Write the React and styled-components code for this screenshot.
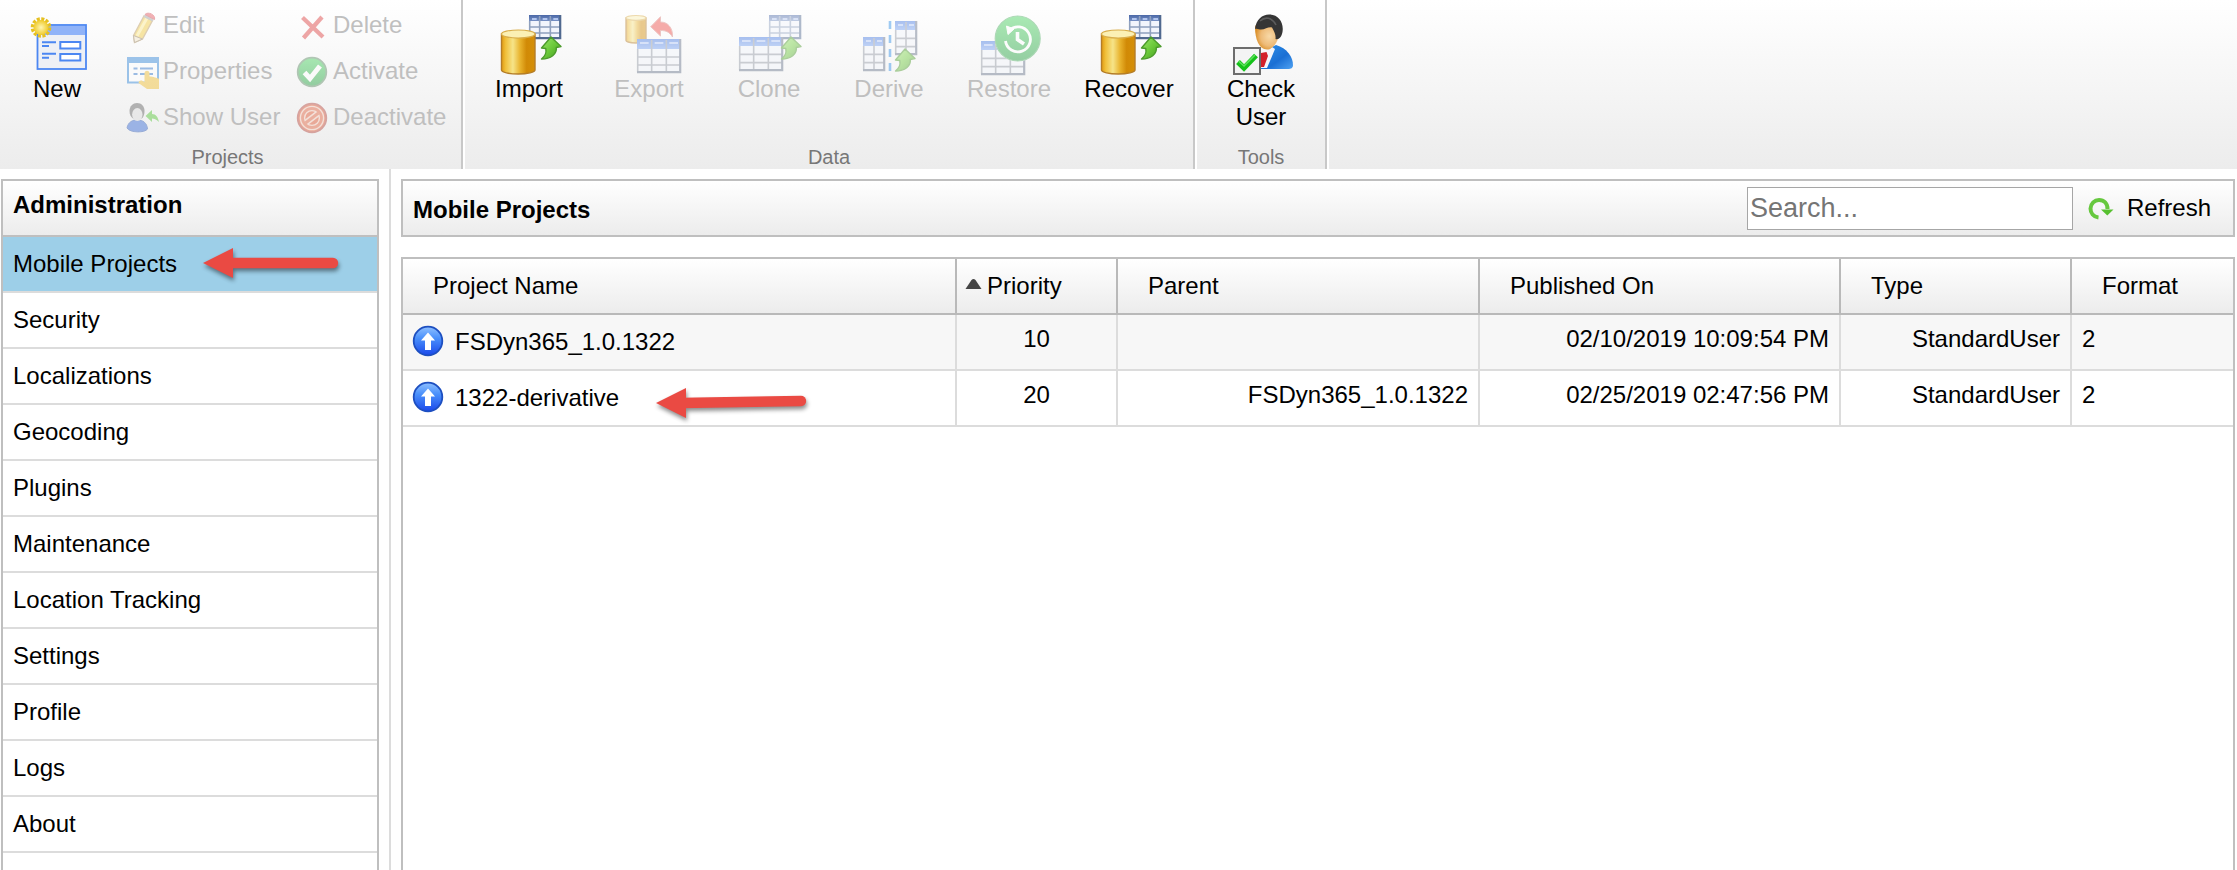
import React from "react";
import styled, { createGlobalStyle, css } from "styled-components";

const GlobalStyle = createGlobalStyle`
  *, *::before, *::after { box-sizing: border-box; }
  body {
    margin: 0;
    background: #fff;
    color: #000;
    font: 24px/28px "Liberation Sans", Arial, sans-serif;
  }
  button, input { font: inherit; color: inherit; }
`;

const LINE = "#bfbfbf";
const SOFT_LINE = "#dcdcdc";
const shade = css`
  background: linear-gradient(#ffffff, #ececec);
`;

const Page = styled.div`
  display: flex;
  flex-direction: column;
  min-height: 100vh;
`;

/* Ribbon */
const Ribbon = styled.header`
  ${shade}
  display: flex;
  height: 169px;
`;
const Group = styled.section`
  display: flex;
  flex-direction: column;
  justify-content: space-between;
  padding: 11px 4px 0;
  border-right: 2px solid #c8c8c8;
  box-shadow: 2px 0 0 #fff;
  & + & { margin-left: 2px; }
`;
const Tools = styled.div`
  display: flex;
`;
const GroupLabel = styled.h2`
  margin: 0;
  padding-right: ${(p) => (p.$inset ? 6 : 0)}px;
  font-size: 20px;
  line-height: 24px;
  font-weight: 400;
  color: #777;
  text-align: center;
`;
const plainButton = css`
  border: 0;
  padding: 0;
  background: none;
  cursor: pointer;
  &:disabled { color: #bfbfbf; cursor: default; }
  &:disabled svg { opacity: 0.45; }
`;
const BigButton = styled.button`
  ${plainButton}
  display: flex;
  flex-direction: column;
  align-items: center;
  width: ${(p) => (p.$narrow ? 106 : 120)}px;
  line-height: 28px;
`;
const BigLabel = styled.span`
  max-width: 92px;
`;
const SmallGrid = styled.div`
  display: grid;
  grid-template-columns: 170px 160px;
  grid-auto-rows: 32px;
  row-gap: 14px;
  padding-left: 17px;
`;
const SmallButton = styled.button`
  ${plainButton}
  display: flex;
  align-items: flex-start;
  gap: 4px;
  line-height: 28px;
  white-space: nowrap;
`;
const Icon = styled.svg`
  display: block;
  flex: none;
  width: ${(p) => p.$size}px;
  height: ${(p) => p.$size}px;
  overflow: visible;
`;

/* Body */
const Body = styled.div`
  display: flex;
  flex: 1;
`;
const Side = styled.aside`
  width: 391px;
  flex: none;
  display: flex;
  padding: 10px 10px 0 1px;
  border-right: 2px solid ${SOFT_LINE};
`;
const SidePanel = styled.nav`
  flex: 1;
  border: 2px solid ${LINE};
  border-bottom: 0;
`;
const SideTitle = styled.h1`
  ${shade}
  margin: 0;
  height: 56px;
  padding: 10px;
  border-bottom: 2px solid ${LINE};
  font-size: 24px;
  line-height: 28px;
`;
const SideList = styled.ul`
  margin: 0;
  padding: 0;
  list-style: none;
`;
const SideLink = styled.a`
  position: relative;
  display: block;
  height: 56px;
  padding: 13px 10px;
  border-bottom: 2px solid ${SOFT_LINE};
  background: ${(p) => (p.$active ? "#9dcfe8" : "#fff")};
  background-clip: padding-box;
  color: #000;
  text-decoration: none;
`;
const Main = styled.main`
  flex: 1;
  min-width: 0;
  display: flex;
  flex-direction: column;
  gap: 20px;
  padding: 10px 2px 0 10px;
`;
const TitleBar = styled.div`
  ${shade}
  display: flex;
  align-items: center;
  height: 58px;
  padding: 0 22px 0 10px;
  border: 2px solid ${LINE};
`;
const Title = styled.h1`
  flex: 1;
  margin: 0;
  padding-top: 4px;
  font-size: 24px;
  line-height: 28px;
`;
const Search = styled.input`
  width: 326px;
  height: 43px;
  padding: 0 2px;
  border: 1px solid #a6a6a6;
  border-radius: 0;
  background: #fff;
  font-size: 27px;
  &::placeholder { color: #757575; opacity: 1; }
`;
const RefreshButton = styled.button`
  ${plainButton}
  display: flex;
  align-items: center;
  gap: 14px;
  margin-left: 15px;
  line-height: 28px;
`;
const Grid = styled.div`
  flex: 1;
  border: 2px solid ${LINE};
  border-bottom: 0;
`;
const Table = styled.table`
  width: 100%;
  table-layout: fixed;
  border-collapse: separate;
  border-spacing: 0;
`;
const HeadCell = styled.th`
  ${shade}
  width: ${(p) => (p.$width ? p.$width + "px" : "auto")};
  height: 56px;
  padding: 13px 0 0 30px;
  border-right: 2px solid #b9b9b9;
  border-bottom: 2px solid #b9b9b9;
  font-weight: 400;
  text-align: left;
  vertical-align: top;
  white-space: nowrap;
  &:last-child { border-right: 0; }
`;
const HeadLabel = styled.span`
  position: relative;
`;
const SortMark = styled.svg`
  position: absolute;
  left: -22px;
  top: 6px;
  width: 17px;
  height: 12px;
`;
const Row = styled.tr`
  background: ${(p) => (p.$odd ? "#f7f7f7" : "#fff")};
`;
const Cell = styled.td`
  height: 56px;
  padding: 10px 10px 0;
  border-right: 2px solid ${SOFT_LINE};
  border-bottom: 2px solid ${SOFT_LINE};
  text-align: ${(p) => p.$align || "left"};
  vertical-align: top;
  white-space: nowrap;
  &:last-child { border-right: 0; }
`;
const NameLine = styled.div`
  position: relative;
  display: flex;
  align-items: center;
  gap: 10px;
  padding-top: 1px;
`;
const Pointer = styled.svg`
  position: absolute;
  left: ${(p) => p.$left}px;
  top: ${(p) => p.$top}px;
  width: 152px;
  height: 34px;
  overflow: visible;
  filter: drop-shadow(1px 3px 2px rgba(0, 0, 0, 0.45));
  pointer-events: none;
`;

/* Drawings */
const Defs = () => (
  <svg width="0" height="0" style={{ position: "absolute" }} aria-hidden="true">
    <defs>
      <linearGradient id="gold">
        <stop offset="0" stopColor="#e09a12" />
        <stop offset="0.12" stopColor="#f0bf3a" />
        <stop offset="0.34" stopColor="#f6e489" />
        <stop offset="0.56" stopColor="#e8b22c" />
        <stop offset="0.75" stopColor="#d18a06" />
        <stop offset="1" stopColor="#d58f08" />
      </linearGradient>
      <linearGradient id="leaf" x1="0" y1="0" x2="1" y2="1">
        <stop offset="0" stopColor="#9be86a" />
        <stop offset="0.5" stopColor="#6cc93a" />
        <stop offset="1" stopColor="#3f9a1d" />
      </linearGradient>
      <linearGradient id="steel" x1="0" y1="0" x2="0" y2="1">
        <stop offset="0" stopColor="#4a67a6" />
        <stop offset="1" stopColor="#7690c4" />
      </linearGradient>
      <linearGradient id="azure" x1="0" y1="0" x2="0" y2="1">
        <stop offset="0" stopColor="#4277e0" />
        <stop offset="1" stopColor="#76a0f0" />
      </linearGradient>
      <linearGradient id="orb" x1="0" y1="0" x2="0" y2="1">
        <stop offset="0" stopColor="#8fc0ff" />
        <stop offset="0.4" stopColor="#4a90fb" />
        <stop offset="1" stopColor="#1a48ea" />
      </linearGradient>
      <linearGradient id="mint" x1="0" y1="0" x2="0" y2="1">
        <stop offset="0" stopColor="#45d35c" />
        <stop offset="1" stopColor="#1d9c3a" />
      </linearGradient>
      <linearGradient id="suit" x1="0" y1="0" x2="1" y2="1">
        <stop offset="0" stopColor="#2f93ec" />
        <stop offset="0.6" stopColor="#1a6fd4" />
        <stop offset="1" stopColor="#4fa2f2" />
      </linearGradient>
      <radialGradient id="face" cx="0.6" cy="0.5" r="0.6">
        <stop offset="0" stopColor="#f8d9a8" />
        <stop offset="0.6" stopColor="#eebb78" />
        <stop offset="1" stopColor="#d98d25" />
      </radialGradient>
      <radialGradient id="sun">
        <stop offset="0" stopColor="#fff6b0" />
        <stop offset="1" stopColor="#efca2c" />
      </radialGradient>
    </defs>
  </svg>
);

const TableShape = ({ x, y, w, h, head, cols = 3, rows = 3, tone = "azure" }) => {
  const dark = tone === "steel";
  const line = dark ? "#8fa0bd" : "#9197a3";
  const edge = dark ? "#50698f" : "#67738a";
  const step = (h - head) / rows;
  return (
    <g>
      <rect x={x} y={y} width={w} height={h} fill="#f2f5fc" />
      <rect x={x} y={y} width={w} height={head} fill={`url(#${tone})`} />
      {Array.from({ length: cols }, (_, i) => (
        <rect key={i} x={x + (w / cols) * i + 3} y={y + 3} width={w / cols - 6} height="2" fill="#c3d5fa" opacity="0.8" />
      ))}
      <path
        d={Array.from({ length: rows - 1 }, (_, i) => `M${x} ${y + head + step * (i + 1)}h${w}`).join("")}
        stroke={line}
        strokeWidth="1.6"
      />
      <path
        d={Array.from({ length: cols - 1 }, (_, i) => `M${x + (w / cols) * (i + 1)} ${y + 1}v${h - 1}`).join("")}
        stroke={line}
        strokeWidth="1.6"
      />
      <path d={`M${x + 0.7} ${y + head}V${y + h - 0.7}`} stroke={line} strokeWidth="1.6" />
      <path d={`M${x} ${y + h - 0.8}H${x + w - 0.8}V${y}`} fill="none" stroke={edge} strokeWidth="2.2" />
    </g>
  );
};

const Barrel = ({ x, y, w, h }) => {
  const r = w / 2;
  const e = w * 0.12;
  return (
    <g>
      <path
        d={`M${x} ${y + e}V${y + h - e}A${r} ${e} 0 0 0 ${x + w} ${y + h - e}V${y + e}Z`}
        fill="url(#gold)"
        stroke="#b47d28"
        strokeWidth="1.4"
      />
      <ellipse cx={x + r} cy={y + e} rx={r} ry={e} fill="#fbf0b4" stroke="#d9ae4c" strokeWidth="1.2" />
    </g>
  );
};

const UpArrow = ({ x = 0, y = 0 }) => (
  <path
    transform={`translate(${x} ${y})`}
    d="M10 0 20 9.500 15.300 10.500C16 17 10 22 0.500 22 4.500 19 5.500 15 4.800 11.500L0.500 11Z"
    fill="url(#leaf)"
    stroke="#4b9a2a"
    strokeWidth="1.400"
    strokeLinejoin="round"
  />
);

const bigArt = {
  New: (
    <>
      <rect x="12.500" y="14" width="48.500" height="44" fill="#eef0f5" stroke="#4c87f2" strokeWidth="1.800" />
      <rect x="13.500" y="15" width="46.500" height="9" fill="#90b3f8" />
      <path d="M17 31.300H31M17 35H24M17 42.700H31M17 46.700H24" stroke="#4c87f2" strokeWidth="2" />
      <rect x="35.300" y="31" width="20" height="6.500" fill="#fff" stroke="#4c87f2" strokeWidth="2" />
      <rect x="35.300" y="43" width="20" height="6.500" fill="#fff" stroke="#4c87f2" strokeWidth="2" />
      <circle cx="16" cy="16.500" r="8.500" fill="none" stroke="#e6c021" strokeWidth="3.600" strokeDasharray="3 1.450" />
      <circle cx="16" cy="16.500" r="7.500" fill="url(#sun)" />
    </>
  ),
  Import: (
    <>
      <TableShape x={32} y={4} w={32} h={24} head={6} tone="steel" />
      <Barrel x={4.5} y={19} w={33.5} h={44} />
      <UpArrow x={44} y={26} />
    </>
  ),
  Export: (
    <>
      <Barrel x={9} y={4.5} w={20} h={27.5} />
      <path
        d="M33.700 15.700 43.500 5.700V11C51 11 56 17 55.500 26 52.500 21 49 19.500 43.500 19.500V25Z"
        fill="#ee4b45"
        stroke="#d9837f"
        strokeWidth="1"
        strokeLinejoin="round"
      />
      <TableShape x={20} y={28} w={44} h={34} head={10} />
    </>
  ),
  Clone: (
    <>
      <TableShape x={32} y={4} w={32} h={24} head={6} tone="steel" />
      <TableShape x={2} y={26} w={44} h={34} head={9} />
      <UpArrow x={44} y={26} />
    </>
  ),
  Derive: (
    <>
      <TableShape x={6} y={26} w={22} h={34} head={9} cols={2} />
      <path d="M33 10V60" stroke="#2f8fe8" strokeWidth="2.600" strokeDasharray="8 6" />
      <TableShape x={38} y={10} w={22} h={34} head={9} cols={2} />
      <UpArrow x={38} y={38} />
    </>
  ),
  Restore: (
    <>
      <TableShape x={4} y={30} w={44} h={34} head={9} />
      <circle cx="40.700" cy="27.500" r="23" fill="#fff" />
      <circle cx="40.700" cy="27.500" r="22.500" fill="url(#mint)" stroke="#4fae63" strokeWidth="1.200" />
      <path d="M32.300 19.300A12.500 12.500 0 1 1 28.500 30" fill="none" stroke="#fff" strokeWidth="2.800" />
      <path d="M29.500 15 31 23.500 37 18Z" fill="#fff" stroke="#fff" />
      <path d="M40.500 21V28.500L47 33" fill="none" stroke="#fff" strokeWidth="3.600" />
    </>
  ),
  "Check User": (
    <>
      <path d="M31 58C31 48 39 37 47 34 58 37 64 46 64 54 64 57 62 58 59 58Z" fill="url(#suit)" />
      <path d="M31 57V44L43 36 46 38 38 57Z" fill="#f3f5fa" />
      <path d="M32 42 37.500 41 39 45 35 56H31Z" fill="#d3202a" />
      <path d="M26 16C27 10 47 10 50 22 50 30 44 38.500 38 38.500 30 38.500 26 28 26 16Z" fill="url(#face)" />
      <path d="M26 18C27 8 34 3 41 3.500 50 4 55 12 53.500 21 52.500 26 50 29 46.500 28 47 24 45.500 21 43 16.500 39 15.500 36 19 31 18.500 28.500 18 27 17.500 26 18Z" fill="#353535" />
      <path d="M31 10C36 5.500 43 6 47 14" fill="none" stroke="#5c5c5c" strokeWidth="1.600" />
      <rect x="5" y="37" width="26" height="26" fill="#f4f4f4" stroke="#6d6d6d" strokeWidth="2" />
      <path d="M9 51 15 57 27 44.500" fill="none" stroke="#16c21a" strokeWidth="5.400" />
      <path d="M9.500 50 15 55 26 44" fill="none" stroke="#5de25c" strokeWidth="1.600" />
    </>
  ),
};
bigArt.Recover = bigArt.Import;

const smallArt = {
  Edit: (
    <>
      <path d="M6.500 24.500 17 5 25.500 9.500 15.500 28 7.500 31.500Z" fill="#f0c93a" stroke="#b9975a" strokeWidth="1.400" />
      <path d="M10 25 20 7" stroke="#fbe98f" strokeWidth="3" />
      <path d="M6.500 24.500 15.500 28 7.500 31.500Z" fill="#f3e4c4" stroke="#8d7858" strokeWidth="1" />
      <path d="M16.500 6 25.500 10.500 27 7.500 18 3Z" fill="#9c9c9c" />
      <path d="M18 3.500C21 0 29 4 27.500 8.500Z" fill="#e3545c" stroke="#d3444c" />
    </>
  ),
  Delete: <path d="M5.500 6.500 26 26M25 6 6.500 27" fill="none" stroke="#dc3b3b" strokeWidth="4.200" />,
  Properties: (
    <>
      <rect x="1" y="1" width="30" height="24.500" fill="#fff" stroke="#2d84d8" strokeWidth="2" />
      <rect width="32" height="6" fill="#2d84d8" />
      <path d="M6.500 11.500H10.500M13 11.500H26M6.500 17H10.500M13 17H26" stroke="#2d74cc" strokeWidth="2.200" />
      <path d="M17.500 16C18 13 22 13 22.500 16V19.500C26 19.500 30.500 21 32 22V32H20L11.500 26C12 22.500 15 23 17.500 25Z" fill="#f0bd2c" />
    </>
  ),
  Activate: (
    <>
      <circle cx="15" cy="15" r="14.300" fill="url(#mint)" stroke="#5c8a63" strokeWidth="1.800" />
      <path d="M7.500 15.500 13 21.500 23 9" fill="none" stroke="#fff" strokeWidth="5" />
    </>
  ),
  "Show User": (
    <>
      <path d="M0 25C1 19 6 16.500 10.500 17 16 17 20 20 20.500 26 18 30 3 30 0 25Z" fill="#3569d8" stroke="#2d59b4" />
      <path d="M2.500 8C2.500 3 6 0 10 0 14.500 0 17.500 3.500 17.500 8 17.500 12 16 15 14.500 15.500H6C4 14 2.500 12 2.500 8Z" fill="#626262" />
      <ellipse cx="10.300" cy="11.500" rx="5.200" ry="6.500" fill="#dedede" />
      <path d="M18.500 13 25 7V11C29 11 31 14 32 19 29 16 27 15.500 25 15.500V19Z" fill="#55c836" />
    </>
  ),
  Deactivate: (
    <>
      <circle cx="15" cy="15" r="14.300" fill="#e0522c" stroke="#b5453c" strokeWidth="1.800" />
      <circle cx="15" cy="15" r="9.500" fill="none" stroke="#f6cdbd" strokeWidth="5.600" />
      <path d="M8.500 20 21.500 10" stroke="#f6cdbd" strokeWidth="6" />
      <circle cx="15" cy="15" r="9.500" fill="none" stroke="#e2603c" strokeWidth="2.800" />
      <path d="M8.500 20 21.500 10" stroke="#e2603c" strokeWidth="3" />
    </>
  ),
};

const UpOrb = () => (
  <Icon $size={32} viewBox="0 0 32 32" aria-hidden="true">
    <circle cx="15" cy="15" r="14.300" fill="url(#orb)" stroke="#1d4fc0" strokeWidth="1.800" />
    <path d="M15 6.500 22 14.500H18V24H12V14.500H8Z" fill="#fff" />
  </Icon>
);

const RefreshMark = () => (
  <Icon $size={25} viewBox="0 0 25 25" aria-hidden="true">
    <path d="M10.500 21.500C5.500 21 2.500 17 2.500 12.500 2.800 7.500 6.500 4 11 4 16 4 19.500 7.500 19.500 13" fill="none" stroke="#66c83e" strokeWidth="4" />
    <path d="M13 13.500H25.500L19.300 19.500Z" fill="#57c030" />
  </Icon>
);

const RedPointer = ({ left, top, length, rise = 0 }) => (
  <Pointer $left={left} $top={top} viewBox="0 0 152 34" aria-hidden="true">
    <path d={`M25 15 ${length - 5} ${15 - rise}`} stroke="#ea4a43" strokeWidth="10.400" strokeLinecap="round" />
    <path d="M0 15 30 0V30Z" fill="#ea4a43" />
  </Pointer>
);

const ToolButton = ({ name, disabled, narrow }) => (
  <BigButton type="button" disabled={disabled} $narrow={narrow}>
    <Icon $size={64} viewBox="0 0 64 64" aria-hidden="true">{bigArt[name]}</Icon>
    <BigLabel>{name}</BigLabel>
  </BigButton>
);

const sideItems = [
  "Mobile Projects", "Security", "Localizations", "Geocoding", "Plugins", "Maintenance",
  "Location Tracking", "Settings", "Profile", "Logs", "About",
];
const columns = [
  ["Project Name"], ["Priority", 161], ["Parent", 362], ["Published On", 361], ["Type", 231], ["Format", 161],
];
const projects = [
  { name: "FSDyn365_1.0.1322", priority: 10, parent: "", published: "02/10/2019 10:09:54 PM" },
  { name: "1322-derivative", priority: 20, parent: "FSDyn365_1.0.1322", published: "02/25/2019 02:47:56 PM", marked: true },
];

export default function App() {
  return (
    <Page>
      <GlobalStyle />
      <Defs />
      <Ribbon>
        <Group>
          <Tools>
            <ToolButton name="New" narrow />
            <SmallGrid>
              {["Edit", "Delete", "Properties", "Activate", "Show User", "Deactivate"].map((name) => (
                <SmallButton key={name} type="button" disabled>
                  <Icon $size={32} viewBox="0 0 32 32" aria-hidden="true">{smallArt[name]}</Icon>
                  {name}
                </SmallButton>
              ))}
            </SmallGrid>
          </Tools>
          <GroupLabel $inset>Projects</GroupLabel>
        </Group>
        <Group>
          <Tools>
            <ToolButton name="Import" />
            <ToolButton name="Export" disabled />
            <ToolButton name="Clone" disabled />
            <ToolButton name="Derive" disabled />
            <ToolButton name="Restore" disabled />
            <ToolButton name="Recover" />
          </Tools>
          <GroupLabel>Data</GroupLabel>
        </Group>
        <Group>
          <Tools>
            <ToolButton name="Check User" />
          </Tools>
          <GroupLabel>Tools</GroupLabel>
        </Group>
      </Ribbon>
      <Body>
        <Side>
          <SidePanel>
            <SideTitle>Administration</SideTitle>
            <SideList>
              {sideItems.map((item, i) => (
                <li key={item}>
                  <SideLink href="#" $active={i === 0}>
                    {item}
                    {i === 0 && <RedPointer left={200} top={11} length={135} />}
                  </SideLink>
                </li>
              ))}
            </SideList>
          </SidePanel>
        </Side>
        <Main>
          <TitleBar>
            <Title>Mobile Projects</Title>
            <Search type="search" placeholder="Search..." aria-label="Search" />
            <RefreshButton type="button">
              <RefreshMark />
              Refresh
            </RefreshButton>
          </TitleBar>
          <Grid>
            <Table>
              <thead>
                <tr>
                  {columns.map(([label, width]) => (
                    <HeadCell key={label} $width={width}>
                      <HeadLabel>
                        {label === "Priority" && (
                          <SortMark viewBox="0 0 17 12" aria-hidden="true">
                            <path d="M0.500 11 6.500 2Q8.500 0 10.500 2L16.500 11Z" fill="#454545" />
                          </SortMark>
                        )}
                        {label}
                      </HeadLabel>
                    </HeadCell>
                  ))}
                </tr>
              </thead>
              <tbody>
                {projects.map((p, i) => (
                  <Row key={p.name} $odd={i % 2 === 0}>
                    <Cell>
                      <NameLine>
                        <UpOrb />
                        {p.name}
                        {p.marked && <RedPointer left={243} top={7} length={150} rise={2} />}
                      </NameLine>
                    </Cell>
                    <Cell $align="center">{p.priority}</Cell>
                    <Cell $align="right">{p.parent}</Cell>
                    <Cell $align="right">{p.published}</Cell>
                    <Cell $align="right">StandardUser</Cell>
                    <Cell>2</Cell>
                  </Row>
                ))}
              </tbody>
            </Table>
          </Grid>
        </Main>
      </Body>
    </Page>
  );
}
